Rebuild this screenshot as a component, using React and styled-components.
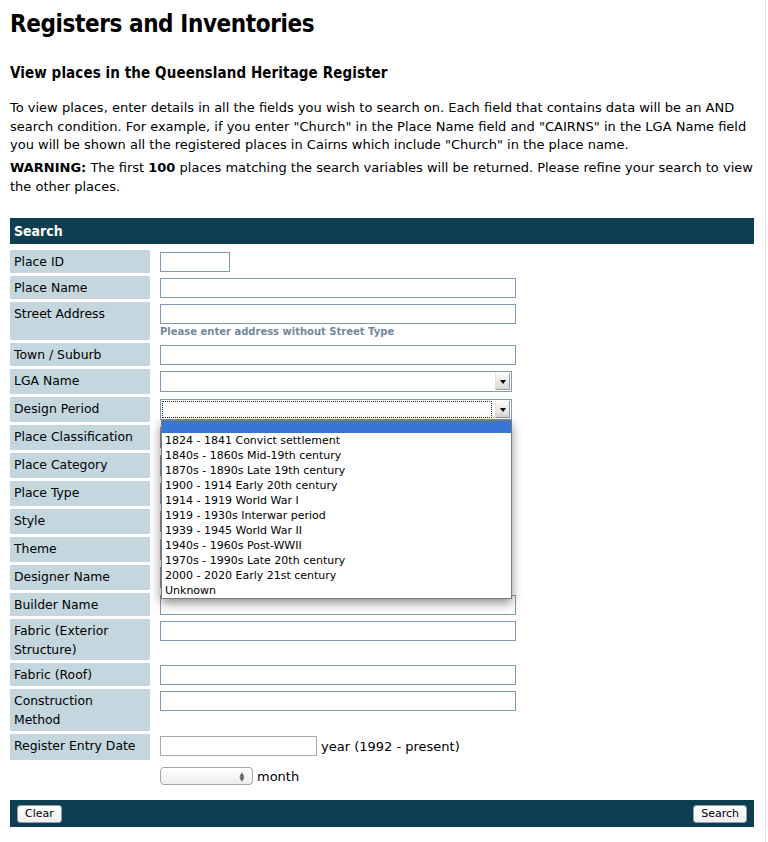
import React from 'react';
import styled, { createGlobalStyle } from 'styled-components';

const GlobalStyle = createGlobalStyle`
  html, body {
    margin: 0;
    padding: 0;
    background: #ffffff;
  }
  body {
    font-family: "DejaVu Sans", Verdana, sans-serif;
    color: #000;
  }
`;

const Page = styled.div`
  width: 744px;
  min-height: 842px;
  padding: 0 11px 0 10px;
  border-right: 1px solid #e6e6e6;
`;

const Title = styled.h1`
  margin: 0;
  padding-top: 9px;
  font-family: "DejaVu Sans Condensed", "DejaVu Sans", sans-serif;
  font-size: 24px;
  line-height: 30px;
  font-weight: bold;
  letter-spacing: -0.4px;
`;

const Subtitle = styled.h2`
  margin: 24px 0 0;
  font-family: "DejaVu Sans Condensed", "DejaVu Sans", sans-serif;
  font-size: 15px;
  line-height: 20px;
  font-weight: bold;
  letter-spacing: 0.1px;
`;

const Para = styled.p`
  margin: ${(p) => p.$top || 0}px 0 0;
  font-family: "DejaVu Sans", sans-serif;
  font-size: 13px;
  line-height: 18.5px;
`;

const Bar = styled.div`
  margin-top: ${(p) => p.$top || 0}px;
  background: #0d3e51;
  color: #fff;
  height: ${(p) => p.$h || 26}px;
  display: flex;
  align-items: center;
  justify-content: space-between;
  padding: 0 ${(p) => (p.$buttons ? 7 : 4)}px;
`;

const BarTitle = styled.span`
  font-family: "DejaVu Sans Condensed", "DejaVu Sans", sans-serif;
  font-weight: bold;
  font-size: 14px;
`;

const Form = styled.div`
  display: grid;
  grid-template-columns: 140px 1fr;
  column-gap: 10px;
  row-gap: 3px;
  margin-top: 6px;
`;

const Label = styled.div`
  background: ${(p) => (p.$empty ? 'transparent' : '#c4d6de')};
  font-size: 12.4px;
  line-height: 19px;
  padding: 2px 10px 0 4px;
  min-height: ${(p) => p.$h || 21}px;
`;

const Cell = styled.div`
  position: relative;
  display: flex;
  flex-direction: column;
  align-items: flex-start;
  padding-top: ${(p) => (p.$pad ?? 2)}px;
`;

const Inline = styled.div`
  display: flex;
  align-items: center;
  gap: 4px;
  font-size: 13px;
`;

const TextInput = styled.div`
  box-sizing: border-box;
  width: ${(p) => p.$w || 356}px;
  height: 20px;
  border: 1px solid ${(p) => (p.$plain ? '#a9a9a9' : '#7f9bb7')};
  background: #fff;
`;

const Hint = styled.div`
  margin-top: 2px;
  font-size: 10px;
  font-weight: bold;
  color: #74889c;
`;

const SelectBox = styled.div`
  position: relative;
  box-sizing: border-box;
  width: 352px;
  height: 21px;
  border: 1px solid #7f9bb7;
  background: #fff;
  padding: 1px;
`;

const Focus = styled.div`
  height: 100%;
  box-sizing: border-box;
  margin-right: 18px;
  border: 1px dotted ${(p) => (p.$on ? '#333' : 'transparent')};
`;

const DropButton = styled.div`
  position: absolute;
  right: 1px;
  top: 1px;
  width: 15px;
  height: 17px;
  background: linear-gradient(#fbfbfb, #d8d8d8);
  border-left: 1px solid #e0e0e0;
  border-bottom: 1px solid #9a9a9a;
  border-right: 1px solid #9a9a9a;
  box-sizing: border-box;
  display: flex;
  align-items: center;
  justify-content: center;
  &::after {
    content: '';
    border-left: 3px solid transparent;
    border-right: 3px solid transparent;
    border-top: 4px solid #000;
    margin-top: 2px;
  }
`;

const MenuList = styled.ul`
  position: absolute;
  z-index: 5;
  top: 23px;
  left: 1px;
  width: 351px;
  margin: 0;
  padding: 0;
  list-style: none;
  background: #fff;
  border: 1px solid #7a7a7a;
  box-shadow: 0 4px 10px rgba(0, 0, 0, 0.45);
  box-sizing: border-box;
`;

const MenuItem = styled.li`
  height: ${(p) => (p.$active ? 12 : 15)}px;
  line-height: 15px;
  padding: 0 3px;
  font-size: 11px;
  background: ${(p) => (p.$active ? '#3875d7' : 'transparent')};
  color: ${(p) => (p.$active ? '#fff' : '#000')};
`;

const MonthSelect = styled.div`
  box-sizing: border-box;
  width: 93px;
  height: 18px;
  border: 1px solid #a6a6a6;
  border-radius: 4px;
  background: linear-gradient(#ffffff, #ececec);
  display: flex;
  justify-content: flex-end;
  align-items: center;
  padding-right: 8px;
  font-size: 6px;
  line-height: 5px;
  color: #555;
`;

const Arrows = styled.span`
  display: flex;
  flex-direction: column;
  align-items: center;
`;

const Button = styled.button`
  font-family: "DejaVu Sans", sans-serif;
  font-size: 11px;
  height: 18px;
  padding: 0 7px;
  background: linear-gradient(#ffffff, #f0f0f0);
  border: 1px solid #9a9a9a;
  border-radius: 3px;
  color: #000;
`;

const periods = [
  '',
  '1824 - 1841 Convict settlement',
  '1840s - 1860s Mid-19th century',
  '1870s - 1890s Late 19th century',
  '1900 - 1914 Early 20th century',
  '1914 - 1919 World War I',
  '1919 - 1930s Interwar period',
  '1939 - 1945 World War II',
  '1940s - 1960s Post-WWII',
  '1970s - 1990s Late 20th century',
  '2000 - 2020 Early 21st century',
  'Unknown',
];

const rows = [
  { label: 'Place ID', kind: 'short' },
  { label: 'Place Name', kind: 'text' },
  { label: 'Street Address', kind: 'hint', h: 36 },
  { label: 'Town / Suburb', kind: 'text' },
  { label: 'LGA Name', kind: 'select', h: 23 },
  { label: 'Design Period', kind: 'select', h: 23, open: true },
  { label: 'Place Classification', kind: 'select', h: 23 },
  { label: 'Place Category', kind: 'select', h: 23 },
  { label: 'Place Type', kind: 'select', h: 23 },
  { label: 'Style', kind: 'select', h: 23 },
  { label: 'Theme', kind: 'select', h: 23 },
  { label: 'Designer Name', kind: 'select', h: 23 },
  { label: 'Builder Name', kind: 'text' },
  { label: 'Fabric (Exterior Structure)', kind: 'text', h: 39 },
  { label: 'Fabric (Roof)', kind: 'text' },
  { label: 'Construction Method', kind: 'text', h: 40 },
];

function Field({ row }) {
  if (row.kind === 'short') return <TextInput $w={70} />;
  if (row.kind === 'text') return <TextInput />;
  if (row.kind === 'hint')
    return (
      <>
        <TextInput />
        <Hint>Please enter address without Street Type</Hint>
      </>
    );
  return (
    <>
      <SelectBox>
        <Focus $on={row.open} />
        <DropButton />
      </SelectBox>
      {row.open && (
        <MenuList>
          {periods.map((p, i) => (
            <MenuItem key={i} $active={i === 0}>
              {p || '\u00a0'}
            </MenuItem>
          ))}
        </MenuList>
      )}
    </>
  );
}

export default function App() {
  return (
    <Page>
      <GlobalStyle />
      <Title>Registers and Inventories</Title>
      <Subtitle>View places in the Queensland Heritage Register</Subtitle>
      <Para $top={16}>
        To view places, enter details in all the fields you wish to search on. Each field that contains data will be an AND
        search condition. For example, if you enter "Church" in the Place Name field and "CAIRNS" in the LGA Name field
        you will be shown all the registered places in Cairns which include "Church" in the place name.
      </Para>
      <Para $top={4.5}>
        <b>WARNING:</b> The first <b>100</b> places matching the search variables will be returned. Please refine your search
        to view the other places.
      </Para>
      <Bar $top={22}>
        <BarTitle>Search</BarTitle>
      </Bar>
      <Form>
        {rows.map((row) => (
          <React.Fragment key={row.label}>
            <Label $h={row.h}>{row.label}</Label>
            <Cell>
              <Field row={row} />
            </Cell>
          </React.Fragment>
        ))}
        <Label $h={24}>Register Entry Date</Label>
        <Cell $pad={2}>
          <Inline>
            <TextInput $w={157} $plain />
            <span>year (1992 - present)</span>
          </Inline>
        </Cell>
        <Label $empty $h={19} />
        <Cell $pad={4}>
          <Inline>
            <MonthSelect>
              <Arrows>
                <span>▲</span>
                <span>▼</span>
              </Arrows>
            </MonthSelect>
            <span>month</span>
          </Inline>
        </Cell>
      </Form>
      <Bar $top={15} $h={27} $buttons>
        <Button>Clear</Button>
        <Button>Search</Button>
      </Bar>
    </Page>
  );
}
